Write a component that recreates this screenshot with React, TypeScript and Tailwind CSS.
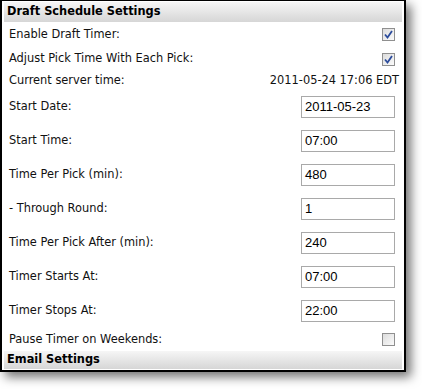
import React from "react";

function Check({ checked }: { checked: boolean }) {
  return (
    <div className="w-[13px] h-[13px] border border-[#8f8f8f] bg-gradient-to-br from-[#dcdcdc] to-[#fbfbfb] flex items-center justify-center">
      {checked && (
        <svg width="9" height="9" viewBox="0 0 9 9">
          <path d="M1 4.5 L3.5 7.5 L8 1" fill="none" stroke="#2c4c9c" strokeWidth="1.8" />
        </svg>
      )}
    </div>
  );
}

function InputRow({ label, value }: { label: string; value: string }) {
  return (
    <div className="h-[34px] flex items-center justify-between pl-[5px] pr-[7px]">
      <span>{label}</span>
      <div className="w-[94px] h-[22px] border border-[#a9a9a9] bg-white flex items-center pl-[3px] text-[13px] text-black font-['Liberation_Sans',Arial,sans-serif]">
        {value}
      </div>
    </div>
  );
}

export default function App() {
  return (
    <div className="w-[422px] h-[389px] bg-white">
      <div className="w-[406px] border-2 border-t border-black bg-white px-[2px] pt-[1px] pb-[1px] shadow-[5px_5px_10px_rgba(0,0,0,0.55)] text-[11.4px] text-[#111] font-['DejaVu_Sans',Verdana,sans-serif]">
        <div className="h-[20px] flex items-center pl-[3px] bg-gradient-to-b from-[#f6f6f6] to-[#d6d6d6] font-bold text-black">
          Draft Schedule Settings
        </div>
        <div className="h-[25px] flex items-center justify-between pl-[5px] pr-[7px]">
          <span>Enable Draft Timer:</span>
          <Check checked />
        </div>
        <div className="h-[24px] flex items-center justify-between pl-[5px] pr-[7px]">
          <span>Adjust Pick Time With Each Pick:</span>
          <Check checked />
        </div>
        <div className="h-[19px] flex items-center justify-between pl-[5px] pr-[3px]">
          <span>Current server time:</span>
          <span>2011-05-24 17:06 EDT</span>
        </div>
        <InputRow label="Start Date:" value="2011-05-23" />
        <InputRow label="Start Time:" value="07:00" />
        <InputRow label="Time Per Pick (min):" value="480" />
        <InputRow label="- Through Round:" value="1" />
        <InputRow label="Time Per Pick After (min):" value="240" />
        <InputRow label="Timer Starts At:" value="07:00" />
        <InputRow label="Timer Stops At:" value="22:00" />
        <div className="h-[23px] flex items-center justify-between pl-[5px] pr-[7px]">
          <span>Pause Timer on Weekends:</span>
          <Check checked={false} />
        </div>
        <div className="h-[18px] flex items-center pl-[3px] bg-gradient-to-b from-[#f6f6f6] to-[#d6d6d6] font-bold text-black">
          Email Settings
        </div>
      </div>
    </div>
  );
}
